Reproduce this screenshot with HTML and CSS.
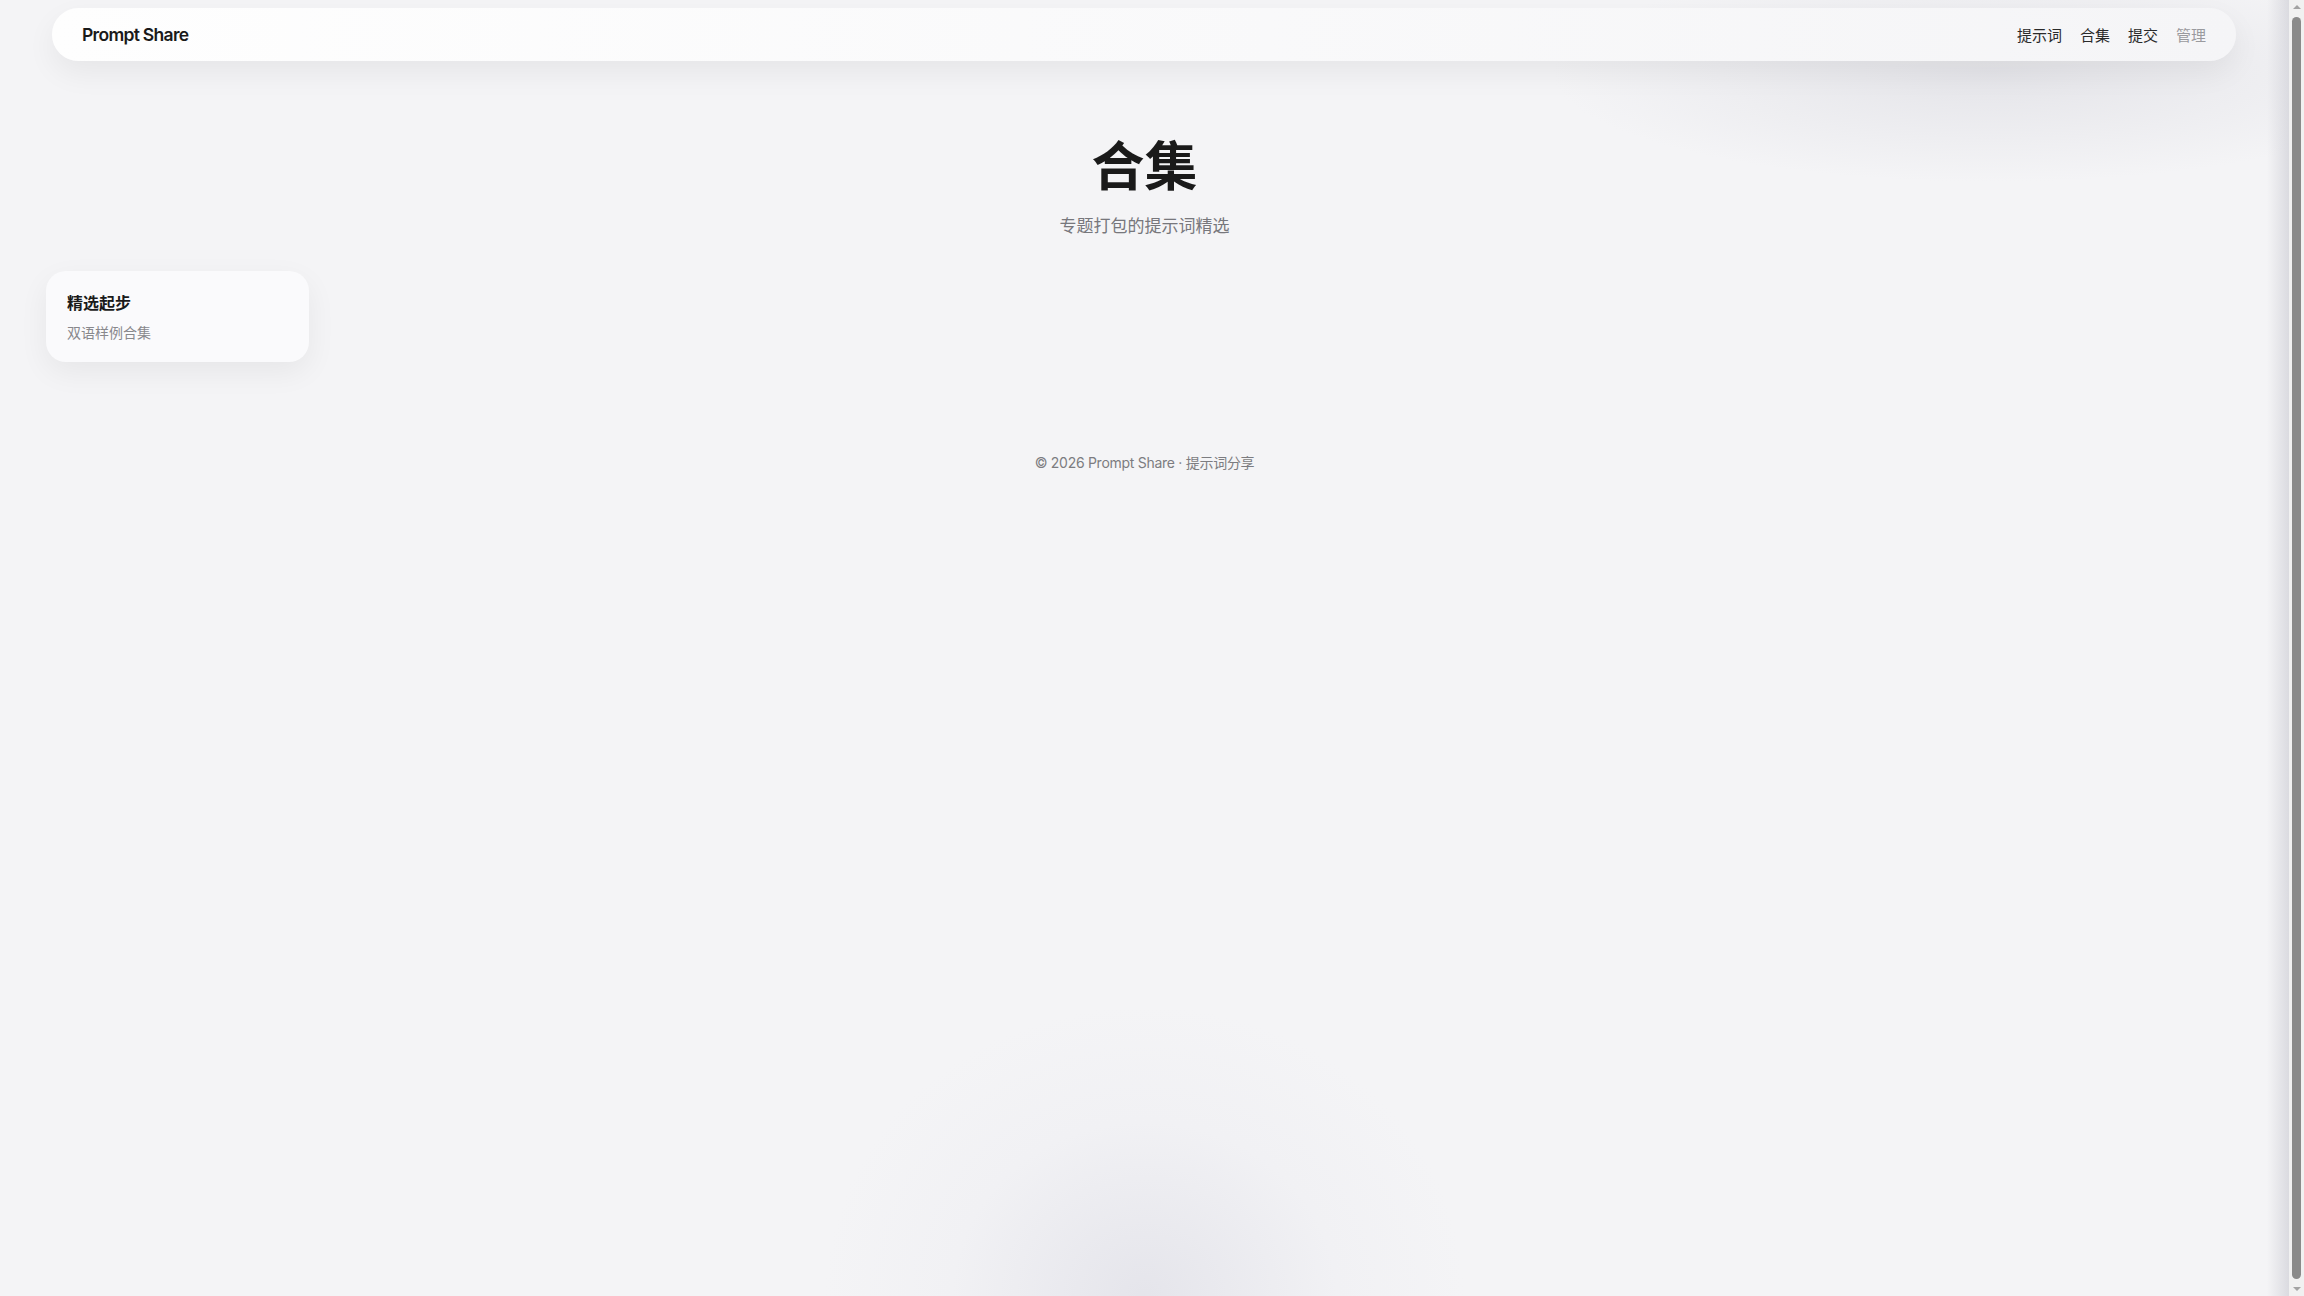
FILE: index.html
```html
<!DOCTYPE html>
<html lang="zh-CN">

<head>
  <meta charset="UTF-8">
  <meta name="viewport" content="width=device-width, initial-scale=1.0">
  <title>合集 - Prompt Share</title>
  <link rel="stylesheet" href="styles.css">
</head>

<body>

  <header class="topbar">
    <nav class="nav-pill">
      <a class="brand" href="#">Prompt Share</a>
      <div class="nav-links">
        <a href="#">提示词</a>
        <a href="#">合集</a>
        <a href="#">提交</a>
        <a href="#" class="muted">管理</a>
      </div>
    </nav>
  </header>

  <main class="page">
    <section class="hero">
      <h1>合集</h1>
      <p>专题打包的提示词精选</p>
    </section>

    <div class="collection-grid">
      <a class="collection-card" href="#">
        <h3>精选起步</h3>
        <p>双语样例合集</p>
      </a>
    </div>
  </main>

  <footer class="site-footer">
    © 2026 Prompt Share · 提示词分享
  </footer>

  <!-- classic scrollbar, drawn since the capture hides the real one -->
  <div class="scrollbar">
    <span class="arrow up"></span>
    <span class="thumb"></span>
    <span class="arrow down"></span>
  </div>

</body>

</html>
```

FILE: styles.css
```css
html {
  background-color: #f4f4f6;
}

body {
  margin: 0 15px 0 0;
  min-height: 100vh;
  font-family: Inter, "Noto Sans CJK SC", sans-serif;
  color: #1c1c1e;
  background-color: #f4f4f6;
  background-image:
    radial-gradient(ellipse 320px 290px at 50% 100%, rgba(226, 226, 233, 0.85), rgba(238, 238, 242, 0.5) 60%, rgba(244, 244, 246, 0) 100%),
    radial-gradient(ellipse 440px 110px at 87% 72px, rgba(220, 220, 226, 0.65), rgba(244, 244, 246, 0) 100%),
    linear-gradient(to left, rgba(214, 214, 220, 0.85), rgba(244, 244, 246, 0) 22px);
  background-repeat: no-repeat;
}

a {
  color: inherit;
  text-decoration: none;
}

.topbar {
  padding: 8px 53px 0 52px;
}

.nav-pill {
  height: 53px;
  display: flex;
  align-items: center;
  justify-content: space-between;
  padding: 0 30px;
  border-radius: 999px;
  background: linear-gradient(to right, #fefefe, #f5f5f7);
  box-shadow: 0 12px 30px rgba(0, 0, 0, 0.06);
}

.brand {
  font-size: 17.5px;
  font-weight: 600;
  letter-spacing: -0.04em;
  color: #1a1a1a;
}

.nav-links {
  display: flex;
  gap: 18px;
}

.nav-links a {
  font-size: 15px;
  color: #2a2a2a;
}

.nav-links a.muted {
  color: #9a9a9e;
}

.page {
  padding: 0 46px;
}

.hero {
  text-align: center;
  padding-top: 70px;
}

.hero h1 {
  margin: 0;
  font-family: "Noto Sans CJK SC", sans-serif;
  font-size: 53px;
  line-height: 64px;
  font-weight: 700;
  color: #1a1a1a;
}

.hero p {
  margin: 17px 0 0;
  font-size: 17px;
  color: #77777c;
}

.collection-grid {
  display: grid;
  grid-template-columns: repeat(auto-fill, 263px);
  gap: 16px;
  margin-top: 34px;
}

.collection-card {
  display: block;
  height: 91px;
  box-sizing: border-box;
  padding: 20px 21px;
  border-radius: 20px;
  background-color: #fafafc;
  box-shadow: 0 10px 30px rgba(0, 0, 0, 0.06);
}

.collection-card h3 {
  margin: 0;
  font-size: 16px;
  font-weight: 700;
  color: #1a1a1a;
  line-height: 24px;
}

.collection-card p {
  margin: 8px 0 0;
  font-size: 14px;
  color: #88888c;
  line-height: 20px;
}

.site-footer {
  text-align: center;
  font-size: 14px;
  letter-spacing: -0.02em;
  color: #7c7c80;
  padding-top: 90px;
}

.scrollbar {
  position: fixed;
  top: 0;
  right: 0;
  width: 15px;
  height: 100vh;
  background-color: #f1f1f1;
  display: flex;
  flex-direction: column;
  align-items: center;
}

.scrollbar .thumb {
  flex: 1;
  width: 9px;
  margin: 3px 0;
  border-radius: 5px;
  background-color: #8a8a8a;
}

.scrollbar .arrow {
  width: 0;
  height: 0;
  margin: 5px 0;
  border-left: 4px solid transparent;
  border-right: 4px solid transparent;
}

.scrollbar .arrow.up {
  border-bottom: 4px solid #a3a3a3;
}

.scrollbar .arrow.down {
  border-top: 4px solid #a3a3a3;
}
```
